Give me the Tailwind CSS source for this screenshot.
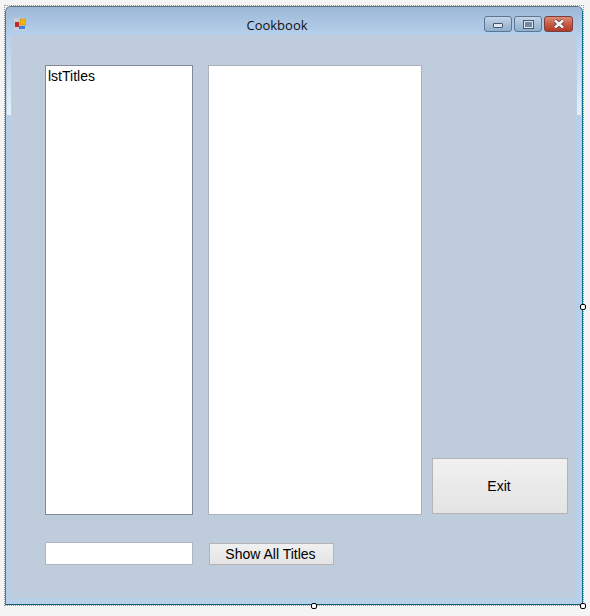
<!DOCTYPE html>
<html lang="en">
<head>
    <meta charset="UTF-8">
    <meta name="viewport" content="width=device-width, initial-scale=1.0">
    <title>Cookbook</title>
    <script src="https://cdn.jsdelivr.net/npm/@tailwindcss/browser@4"></script>
</head>
<body class="h-[616px] w-[590px] overflow-hidden bg-[#f4f4f4] font-['Liberation_Sans',sans-serif] text-black">
    <div class="pl-[4px] pt-[5px]">
        <!-- Designer selection frame -->
        <div class="relative h-[601px] w-[580px] border border-dotted border-[#9a9a9a]">
            <!-- Form window -->
            <div class="relative flex h-[599px] w-[578px] flex-col rounded-t-[6px] border border-[#5f6f7c] border-r-[#0f6f8c] border-b-[#0f5f6c] bg-[#b7d0ea]">
                <!-- Title bar -->
                <div class="relative flex h-[28px] shrink-0 items-center justify-center rounded-t-[5px] bg-gradient-to-b from-[#9db8d6] to-[#b6d0ec] pr-[34px] pt-[9px]">
                    <svg class="absolute left-[8px] top-[11px]" width="12" height="12" viewBox="0 0 12 12">
                        <rect width="12" height="12" fill="#c6ced8"/>
                        <rect x="1" y="4" width="4" height="5" fill="#c0282a"/>
                        <rect x="6" y="1" width="6" height="6" fill="#f2b40c" stroke="#b98a10" stroke-width="0.6"/>
                        <rect x="5" y="8" width="6" height="3" fill="#3f7fdc"/>
                    </svg>
                    <span class="font-['Open_Sans',sans-serif] text-[13px] text-[#111]">Cookbook</span>
                    <!-- Caption buttons -->
                    <div class="absolute right-[9px] top-[9px] flex gap-[2px]">
                        <div class="flex h-[16px] w-[28px] items-end justify-center rounded-[3px] border border-[#5e7590] bg-gradient-to-b from-[#c4d6e8] via-[#a9c0d8] to-[#8fb0d0] pb-[3px]">
                            <div class="h-[5px] w-[10px] rounded-[1px] border border-[#46586c] bg-[#dfe6ee]"></div>
                        </div>
                        <div class="flex h-[16px] w-[28px] items-center justify-center rounded-[3px] border border-[#5e7590] bg-gradient-to-b from-[#c4d6e8] via-[#a9c0d8] to-[#8fb0d0]">
                            <div class="h-[9px] w-[11px] border border-[#46586c] bg-[#6f88a6] shadow-[inset_0_0_0_1px_#dfe6ee]"></div>
                        </div>
                        <div class="flex h-[16px] w-[29px] items-center justify-center rounded-[3px] border border-[#7c3f3c] bg-gradient-to-b from-[#dd8a78] via-[#c85a48] to-[#b23a24]">
                            <svg width="12" height="10" viewBox="0 0 12 10">
                                <path d="M2 1.5 L10 8.5 M10 1.5 L2 8.5" stroke="#4d3a3a" stroke-width="4"/>
                                <path d="M2 1.5 L10 8.5 M10 1.5 L2 8.5" stroke="#f4f4f4" stroke-width="2.6"/>
                            </svg>
                        </div>
                    </div>
                </div>
                <!-- Client area -->
                <div class="mx-[6px] mb-[6px] flex-1 bg-[#bfccdb] pl-[33px] pt-[30px]">
                    <div class="flex h-[450px] items-stretch">
                        <div class="w-[148px] border border-[#7f8a96] bg-white pl-[2px] text-[14px] leading-[21px]">lstTitles</div>
                        <div class="ml-[15px] w-[214px] border border-[#aab2bc] bg-white"></div>
                        <button class="ml-[10px] mb-[1px] flex h-[56px] w-[136px] items-center justify-center self-end border border-[#b4b4b4] bg-gradient-to-b from-[#f0f0f0] to-[#e4e4e4] pr-[2px] text-[14px]">Exit</button>
                    </div>
                    <div class="mt-[27px] flex items-center">
                        <div class="h-[23px] w-[148px] border border-[#aeb6c0] bg-white"></div>
                        <button class="ml-[16px] flex h-[22px] w-[125px] items-center justify-center border border-[#b4b4b4] bg-gradient-to-b from-[#f0f0f0] to-[#e4e4e4] pr-[2px] pt-[1px] text-[14px]">Show All Titles</button>
                    </div>
                </div>
                <!-- Glass sheen on the side borders -->
                <div class="absolute left-[1px] top-[28px] h-[80px] w-[4px] bg-gradient-to-b from-[#b7d0ea] to-[#e6eff8]"></div>
                <div class="absolute right-[1px] top-[28px] h-[80px] w-[4px] bg-gradient-to-b from-[#b7d0ea] to-[#e6eff8]"></div>
            </div>
            <!-- Selection handles -->
            <div class="absolute left-[575px] top-[298px] size-[6px] rounded-[2px] border border-black bg-white"></div>
            <div class="absolute left-[306px] top-[597px] size-[6px] rounded-[2px] border border-black bg-white"></div>
            <div class="absolute left-[575px] top-[597px] size-[6px] rounded-[2px] border border-black bg-white"></div>
        </div>
    </div>
</body>
</html>
